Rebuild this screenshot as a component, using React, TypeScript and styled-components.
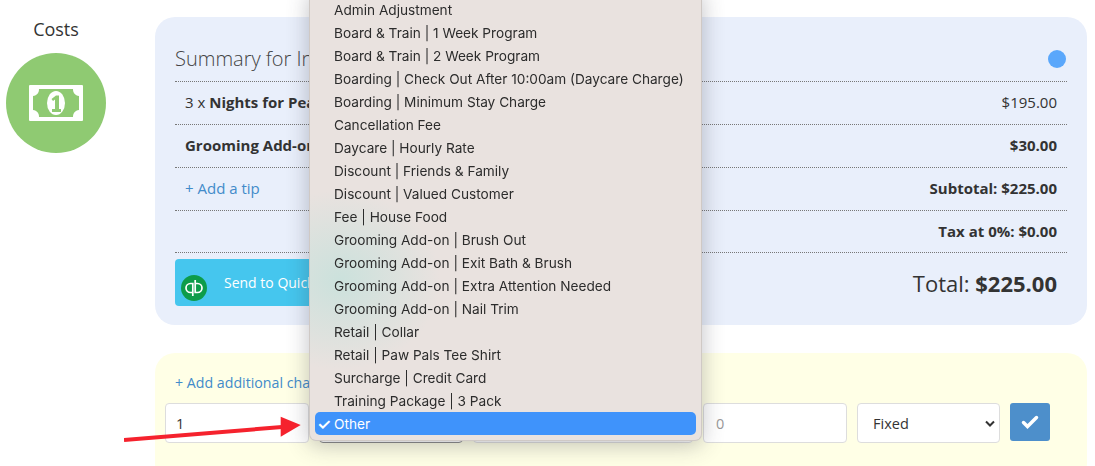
import React from "react";
import styled, { createGlobalStyle } from "styled-components";

const Global = createGlobalStyle`
  html, body { margin: 0; padding: 0; background: #fff; overflow: hidden; }
  body { font-family: "Open Sans", "Liberation Sans", sans-serif; color: #333; }
  * { box-sizing: border-box; }
`;

const Page = styled.div`
  position: relative;
  width: 1095px;
  height: 466px;
  overflow: hidden;
  display: flex;
`;
const SideColumn = styled.aside`
  width: 155px;
  flex: none;
  padding: 17px 0 0 6px;
`;
const SideLabel = styled.div`
  width: 100px;
  text-align: center;
  font-size: 18px;
  line-height: 24px;
  margin-bottom: 12px;
`;
const CostIcon = styled.div`
  width: 100px;
  height: 100px;
  border-radius: 50%;
  background: #8fca72;
  display: flex;
  align-items: center;
  justify-content: center;
`;
const Main = styled.main`
  width: 932px;
  flex: none;
  padding-top: 17px;
`;
const SummaryCard = styled.section`
  height: 308px;
  background: #e9effb;
  border-radius: 20px;
  padding: 20px 20px 0;
`;
const TitleRow = styled.div`
  height: 45px;
  display: flex;
  align-items: center;
  justify-content: space-between;
  border-bottom: 1px dotted #777;
`;
const Title = styled.h2`
  margin: 0;
  font-size: 20px;
  font-weight: 300;
  color: #444;
  line-height: 26px;
`;
const StatusDot = styled.span`
  width: 18px;
  height: 18px;
  margin-right: 1px;
  border-radius: 50%;
  background: #5aa7fb;
`;
const Row = styled.div<{ $h?: number }>`
  height: ${(p) => p.$h ?? 43}px;
  display: flex;
  align-items: center;
  justify-content: space-between;
  padding: 0 10px 2px;
  font-size: 15px;
  border-bottom: 1px dotted #777;
`;
const TipLink = styled.a`
  color: #428bca;
  font-size: 15px;
`;
const FootRow = styled.div`
  display: flex;
  align-items: center;
  justify-content: space-between;
  height: 47px;
  margin-top: 6px;
  padding-right: 10px;
`;
const QuickBooks = styled.button`
  width: 300px;
  height: 47px;
  border: 0;
  border-radius: 4px;
  background: #45c6ee;
  color: #fff;
  display: flex;
  align-items: flex-start;
  font: 500 14px "Open Sans", sans-serif;
  padding: 15px 0 0 6px;
  gap: 17px;
`;
const QbLogo = styled.svg`
  flex: none;
  margin-top: 1px;
`;
const QbText = styled.span`
  line-height: 17px;
`;
const Total = styled.div`
  font-size: 22px;
  color: #333;
  font-weight: 400;
`;
const ChargeCard = styled.section`
  margin-top: 28px;
  height: 130px;
  background: #ffffe6;
  border-radius: 20px;
  padding: 20px 10px 0;
`;
const AddLink = styled.a`
  display: block;
  color: #428bca;
  font-size: 14.2px;
  line-height: 20px;
  margin-left: 10px;
  height: 30px;
`;
const FieldRow = styled.div`
  display: flex;
  gap: 10px;
  align-items: flex-start;
`;
const Field = styled.div<{ $w: number; $muted?: boolean; $dark?: boolean }>`
  width: ${(p) => p.$w}px;
  height: 40px;
  background: #fff;
  border: 1px solid ${(p) => (p.$dark ? "#8a8a8a" : "#ddd")};
  border-radius: 4px;
  padding: 0 12px;
  display: flex;
  align-items: center;
  justify-content: space-between;
  font-size: 14.5px;
  color: ${(p) => (p.$muted ? "#999" : "#333")};
`;
const QtyValue = styled.span`
  margin-left: -2px;
`;
const SelectValue = styled.span`
  margin-left: 3px;
`;
const SaveButton = styled.button`
  width: 40px;
  height: 38px;
  border: 0;
  border-radius: 3px;
  background: #4d8fcb;
  display: flex;
  align-items: center;
  justify-content: center;
  padding: 0;
`;
const Menu = styled.ul`
  position: absolute;
  left: 309px;
  top: -10px;
  width: 393px;
  height: 451px;
  margin: 0;
  padding: 0 5px 5px;
  list-style: none;
  border-radius: 0 0 7px 7px;
  border: 1px solid #cfc9c5;
  border-top: 0;
  background:
    radial-gradient(ellipse 100px 90px at 30px 290px, #cbe1dc 0%, rgba(203, 225, 220, 0) 100%),
    #e9e2df;
  box-shadow: 0 4px 22px rgba(60, 60, 70, 0.32);
  font-family: Inter, "Liberation Sans", sans-serif;
  font-size: 13.65px;
  color: #2c2c2c;
  display: flex;
  flex-direction: column;
  justify-content: flex-end;
`;
const MenuItem = styled.li<{ $selected?: boolean }>`
  height: 23px;
  flex: none;
  line-height: 25px;
  padding-left: 19px;
  position: relative;
  border-radius: 5px;
  white-space: nowrap;
  filter: ${(p) => (p.$selected ? "none" : "grayscale(1)")};
  background: ${(p) => (p.$selected ? "#3f93fb" : "transparent")};
  color: ${(p) => (p.$selected ? "#fff" : "inherit")};
`;
const Tick = styled.span`
  position: absolute;
  left: 2px;
  top: 0;
  font-size: 16px;
  font-weight: 600;
`;
const Arrow = styled.svg`
  position: absolute;
  left: 124px;
  top: 412px;
`;

const items = [
  "Admin Adjustment",
  "Board & Train | 1 Week Program",
  "Board & Train | 2 Week Program",
  "Boarding | Check Out After 10:00am (Daycare Charge)",
  "Boarding | Minimum Stay Charge",
  "Cancellation Fee",
  "Daycare | Hourly Rate",
  "Discount | Friends & Family",
  "Discount | Valued Customer",
  "Fee | House Food",
  "Grooming Add-on | Brush Out",
  "Grooming Add-on | Exit Bath & Brush",
  "Grooming Add-on | Extra Attention Needed",
  "Grooming Add-on | Nail Trim",
  "Retail | Collar",
  "Retail | Paw Pals Tee Shirt",
  "Surcharge | Credit Card",
  "Training Package | 3 Pack",
];

export default function App() {
  return (
    <Page>
      <Global />
      <SideColumn>
        <SideLabel>Costs</SideLabel>
        <CostIcon>
          <svg width="54" height="36" viewBox="0 0 54 36">
            <rect width="54" height="36" rx="1" fill="#fff" />
            <path
              d="M10 4H44C44 8 46 10.500 50 11V25C46 25.500 44 28 44 32H10C10 28 8 25.500 4 25V11C8 10.500 10 8 10 4Z"
              fill="#8fca72"
            />
            <ellipse cx="27" cy="18" rx="9" ry="12" fill="#fff" />
            <path d="M22.500 14L27 10.500H30V24H32V27H23V24H26V14.500L24 16Z" fill="#8fca72" />
          </svg>
        </CostIcon>
      </SideColumn>
      <Main>
        <SummaryCard>
          <TitleRow>
            <Title>Summary for Invoice</Title>
            <StatusDot />
          </TitleRow>
          <Row>
            <span>
              3 x <b>Nights for Peanut</b>
            </span>
            <span>$195.00</span>
          </Row>
          <Row>
            <b>Grooming Add-on</b>
            <b>$30.00</b>
          </Row>
          <Row>
            <TipLink>+ Add a tip</TipLink>
            <b>Subtotal: $225.00</b>
          </Row>
          <Row $h={42}>
            <span />
            <b>Tax at 0%: $0.00</b>
          </Row>
          <FootRow>
            <QuickBooks>
              <QbLogo width="26" height="26" viewBox="0 0 26 26">
                <circle cx="13" cy="13" r="13" fill="#0d9c4a" />
                <g fill="none" stroke="#fff" strokeWidth="1.700">
                  <path d="M11.800 17.500H9.500a4.500 4.500 0 0 1 0-9h2.300v12.500" />
                  <path d="M14.200 8.500H16.500a4.500 4.500 0 0 1 0 9H14.200V5" />
                </g>
              </QbLogo>
              <QbText>Send to QuickBooks</QbText>
            </QuickBooks>
            <Total>
              Total: <b>$225.00</b>
            </Total>
          </FootRow>
        </SummaryCard>
        <ChargeCard>
          <AddLink>+ Add additional charge</AddLink>
          <FieldRow>
            <Field $w={144}>
              <QtyValue>1</QtyValue>
            </Field>
            <Field $w={144} $dark />
            <Field $w={220} />
            <Field $w={144} $muted>
              0
            </Field>
            <Field $w={143}>
              <SelectValue>Fixed</SelectValue>
              <svg width="10" height="7" viewBox="0 0 10 7" style={{ marginRight: -8 }}>
                <path d="M1 1.500L5 5.500L9 1.500" fill="none" stroke="#333" strokeWidth="2" />
              </svg>
            </Field>
            <SaveButton>
              <svg width="18" height="14" viewBox="0 0 18 14">
                <path
                  d="M2.500 7.500L6.500 11.500L15.500 2.500"
                  fill="none"
                  stroke="#fff"
                  strokeWidth="3.500"
                  strokeLinecap="round"
                />
              </svg>
            </SaveButton>
          </FieldRow>
        </ChargeCard>
      </Main>
      <Menu>
        {items.map((t) => (
          <MenuItem key={t}>{t}</MenuItem>
        ))}
        <MenuItem $selected>
          <Tick>✓</Tick>Other
        </MenuItem>
      </Menu>
      <Arrow width="180" height="30" viewBox="0 0 180 30">
        <path d="M0 28L158 15" stroke="#f5222d" strokeWidth="4" />
        <path d="M156.700 4.700L176.700 13L156.700 24.700Z" fill="#f5222d" />
      </Arrow>
    </Page>
  );
}
